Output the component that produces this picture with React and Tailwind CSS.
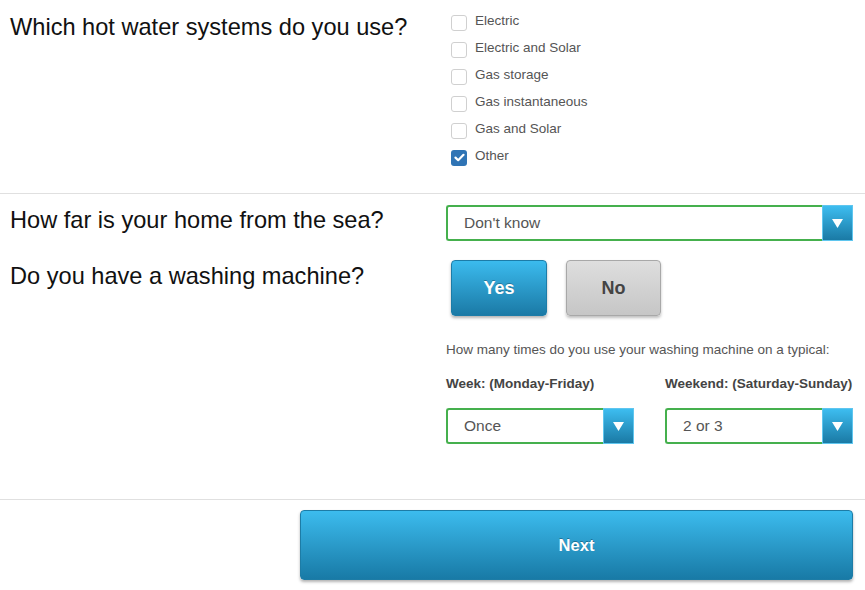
import { useState } from 'react'

const OPTIONS = ['Electric', 'Electric and Solar', 'Gas storage', 'Gas instantaneous', 'Gas and Solar', 'Other']

const Checkbox = ({ label, checked }) => (
  <label className="flex items-center h-[27px] gap-[8px] pl-[5px]">
    {checked ? (
      <span className="w-[16px] h-[16px] rounded-[3px] bg-[#2f74b5] flex items-center justify-center translate-y-[1px]">
        <svg width="11" height="9" viewBox="0 0 11 9">
          <path d="M1.5 4.6 L4.2 7.2 L9.5 1.8" fill="none" stroke="#fff" strokeWidth="2.2" strokeLinecap="round" strokeLinejoin="round" />
        </svg>
      </span>
    ) : (
      <span className="w-[16px] h-[16px] rounded-[3px] border border-[#d0d0d0] bg-white translate-y-[1px]" />
    )}
    <span className="text-[13.5px] text-[#555]">{label}</span>
  </label>
)

const Select = ({ value, className = '' }) => (
  <div className={`flex h-[36px] ${className}`}>
    <div className="flex-1 flex items-center pl-[16px] border-2 border-r-0 border-[#45b04d] rounded-l-[3px] bg-white text-[15.5px] text-[#555]">
      {value}
    </div>
    <div className="w-[31px] flex items-center justify-center bg-gradient-to-b from-[#3dbdf0] to-[#1a7aa5] border border-[#5fc6ef]">
      <svg width="11" height="9" viewBox="0 0 11 9">
        <path d="M0 0 H11 L5.5 9 Z" fill="#fff" />
      </svg>
    </div>
  </div>
)

const Question = ({ children, className = '' }) => (
  <div className={`w-[446px] shrink-0 pl-[10px] text-[23.6px] leading-[28px] text-[#111] ${className}`}>{children}</div>
)

export default function App() {
  const [washer] = useState(true)
  return (
    <div className="w-[865px] min-h-[590px] bg-white font-['Liberation_Sans',Arial,sans-serif]">
      {/* Hot water */}
      <div className="flex">
        <Question className="pt-[13px]">Which hot water systems do you use?</Question>
        <div className="pt-[8px] pb-[23px]">
          {OPTIONS.map((o) => (
            <Checkbox key={o} label={o} checked={o === 'Other'} />
          ))}
        </div>
      </div>

      <div className="h-px bg-[#e0e0e0]" />

      {/* Sea + washing machine */}
      <div className="pt-[11px] pb-[55px] pr-[12px]">
        <div className="flex items-start">
          <Question className="mt-[1px]">How far is your home from the sea?</Question>
          <Select value="Don't know" className="flex-1" />
        </div>

        <div className="flex items-start mt-[19px]">
          <Question className="mt-[2px]">Do you have a washing machine?</Question>
          <div className="flex-1">
            <div className="flex gap-[19px] pl-[5px]">
              <button className={`w-[96px] h-[56px] rounded-[4px] border text-[18px] font-bold shadow-[0_2px_3px_rgba(0,0,0,0.3)] ${washer ? 'bg-gradient-to-b from-[#3bbbee] to-[#1b7aa6] border-[#1c7ca8] text-white [text-shadow:0_-1px_0_rgba(0,0,0,0.25)]' : ''}`}>
                Yes
              </button>
              <button className="w-[95px] h-[56px] rounded-[4px] border border-[#a8a8a8] bg-gradient-to-b from-[#dedede] to-[#c6c6c6] text-[18px] font-bold text-[#444] shadow-[0_2px_3px_rgba(0,0,0,0.25)]">
                No
              </button>
            </div>

            <p className="mt-[24px] text-[13.5px] leading-[20px] text-[#555]">
              How many times do you use your washing machine on a typical:
            </p>

            <div className="grid grid-cols-[188px_188px] justify-between mt-[14px]">
              <div className="text-[13.5px] leading-[20px] font-bold text-[#444]">Week: (Monday-Friday)</div>
              <div className="text-[13.5px] leading-[20px] font-bold text-[#444]">Weekend: (Saturday-Sunday)</div>
              <Select value="Once" className="mt-[14px]" />
              <Select value="2 or 3" className="mt-[14px]" />
            </div>
          </div>
        </div>
      </div>

      <div className="h-px bg-[#e0e0e0]" />

      {/* Next */}
      <div className="flex justify-end pt-[10px] pr-[12px] pb-[10px]">
        <button className="w-[553px] h-[70px] rounded-[4px] border border-[#1d7ca6] bg-gradient-to-b from-[#3cbcee] to-[#187aa6] text-white text-[16.5px] font-bold shadow-[0_2px_3px_rgba(0,0,0,0.3)] [text-shadow:0_-1px_0_rgba(0,0,0,0.3)]">
          Next
        </button>
      </div>
    </div>
  )
}
